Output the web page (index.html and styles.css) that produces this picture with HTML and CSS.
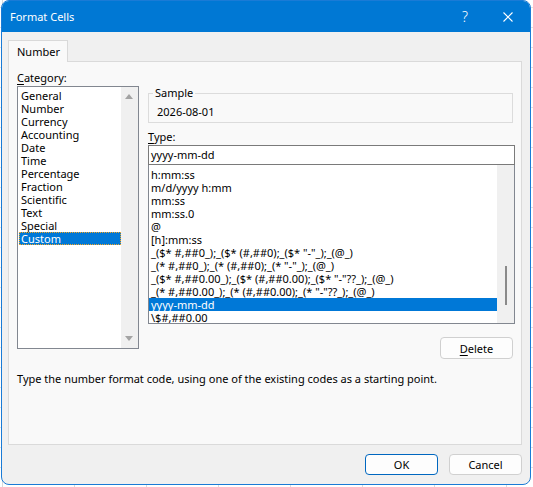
FILE: index.html
```html
<!DOCTYPE html>
<html lang="en">
<head>
    <meta charset="UTF-8">
    <meta name="viewport" content="width=device-width, initial-scale=1.0">
    <title>Format Cells</title>

    <link rel="stylesheet" href="styles.css">
</head>
<body>
    <div class="window">
        <div class="titlebar">
            <span class="title">Format Cells</span>
            <span class="help">?</span>
            <span class="close">
                <svg width="10" height="10" viewBox="0 0 10 10">
                    <path d="M0.5 0.5 L9.5 9.5 M9.5 0.5 L0.5 9.5" stroke="#fff" stroke-width="1.1" fill="none"/>
                </svg>
            </span>
        </div>

        <div class="content">
            <div class="tabs">
                <div class="tab">Number</div>
            </div>

            <section class="panel">
                <div class="columns">
                    <div class="category">
                        <p class="label"><u>C</u>ategory:</p>
                        <div class="listbox cat_list">
                            <ul>
                                <li>General</li>
                                <li>Number</li>
                                <li>Currency</li>
                                <li>Accounting</li>
                                <li>Date</li>
                                <li>Time</li>
                                <li>Percentage</li>
                                <li>Fraction</li>
                                <li>Scientific</li>
                                <li>Text</li>
                                <li>Special</li>
                                <li class="selected focus">Custom</li>
                            </ul>
                            <div class="scrollbar">
                                <span class="arrow up"></span>
                                <span class="arrow down"></span>
                            </div>
                        </div>
                    </div>

                    <div class="format">
                        <fieldset class="sample">
                            <legend>Sample</legend>
                            <p>2026-08-01</p>
                        </fieldset>

                        <p class="label type_label"><u>T</u>ype:</p>
                        <div class="type_input">yyyy-mm-dd</div>
                        <div class="listbox type_list">
                            <ul>
                                <li>h:mm:ss</li>
                                <li>m/d/yyyy h:mm</li>
                                <li>mm:ss</li>
                                <li>mm:ss.0</li>
                                <li>@</li>
                                <li>[h]:mm:ss</li>
                                <li>_($* #,##0_);_($* (#,##0);_($* "-"_);_(@_)</li>
                                <li>_(* #,##0_);_(* (#,##0);_(* "-"_);_(@_)</li>
                                <li>_($* #,##0.00_);_($* (#,##0.00);_($* "-"??_);_(@_)</li>
                                <li>_(* #,##0.00_);_(* (#,##0.00);_(* "-"??_);_(@_)</li>
                                <li class="selected">yyyy-mm-dd</li>
                                <li>\$#,##0.00</li>
                            </ul>
                            <div class="scrollbar">
                                <span class="thumb"></span>
                            </div>
                        </div>

                        <div class="delete_row">
                            <button class="btn"><u>D</u>elete</button>
                        </div>
                    </div>
                </div>

                <p class="hint">Type the number format code, using one of the existing codes as a starting point.</p>
            </section>

            <div class="footer">
                <button class="btn default">OK</button>
                <button class="btn">Cancel</button>
            </div>
        </div>
    </div>
</body>
</html>
```

FILE: styles.css
```css
* {
    margin:0;
    padding:0;
    box-sizing:border-box;
}

body {
    width:533px;
    height:487px;
    overflow:hidden;
    background-color:#fff;
    background-image:
        repeating-linear-gradient(90deg, transparent 0 2px, #dadada 2px 3px, transparent 3px 72px),
        repeating-linear-gradient(0deg, transparent 0 19px, #e2e2e2 19px 20px);
    font-family:"Noto Sans", "Open Sans", sans-serif;
    font-size:11px;
    color:#000;
}

ul, li {
    list-style:none;
}

u {
    text-decoration-thickness:1px;
    text-underline-offset:2px;
}

.window {
    width:530px;
    height:485px;
    margin-left:1px;
    border:1px solid #1a7bd6;
    border-radius:8px;
    overflow:hidden;
    background:#f0f0f0;
}

/* title */
.titlebar {
    display:flex;
    align-items:center;
    height:31px;
    padding-left:8px;
    background:#0078d4;
    color:#fff;
}

.title {
    flex:1;
    font-size:11px;
}

.help {
    width:14px;
    margin-right:31px;
    font-size:14px;
    font-weight:300;
    text-align:center;
}

.close {
    display:flex;
    width:10px;
    margin-right:17px;
}

/* tabs + panel */
.content {
    padding:8px 0 0 6px;
}

.tabs {
    display:flex;
    position:relative;
    z-index:1;
    margin-bottom:-1px;
}

.tab {
    width:60px;
    height:22px;
    padding-left:8px;
    line-height:21px;
    background:#f9f9f9;
    border:1px solid #d9d9d9;
    border-bottom:none;
}

.panel {
    width:514px;
    height:384px;
    padding:8px 0 0 8px;
    background:#f9f9f9;
    border:1px solid #dadada;
}

.columns {
    display:flex;
    gap:9px;
}

.label {
    height:16px;
    line-height:15px;
}

/* list boxes */
.listbox {
    display:flex;
    background:#fff;
    border:1px solid #828790;
    overflow:hidden;
}

.listbox ul {
    flex:1;
    min-width:0;
    padding-top:2px;
}

.listbox li {
    height:13px;
    line-height:13px;
    white-space:nowrap;
}

.listbox li.selected {
    background:#0078d7;
    color:#fff;
}

.scrollbar {
    position:relative;
    width:17px;
    background:#f0f0f0;
}

.cat_list {
    width:122px;
    height:263px;
}

.cat_list ul {
    padding-left:1px;
}

.cat_list li {
    padding-left:2px;
}

.cat_list li.focus {
    outline:1px dotted #f5a623;
    outline-offset:-1px;
}

.arrow {
    display:block;
    position:absolute;
    left:4px;
    width:0;
    height:0;
    border-left:4px solid transparent;
    border-right:4px solid transparent;
}

.arrow.up {
    top:7px;
    border-bottom:5px solid #a3a3a3;
}

.arrow.down {
    bottom:7px;
    border-top:5px solid #a3a3a3;
}

.format {
    width:367px;
}

.sample {
    height:37px;
    margin:16px 2px 0 0;
    padding:5px 8px 0;
    border:1px solid #dcdcdc;
}

.sample legend {
    margin-left:-4px;
    padding:0 2px;
    line-height:14px;
}

.sample p {
    line-height:14px;
}

.type_label {
    margin-top:6px;
}

.type_input {
    height:20px;
    padding-left:2px;
    line-height:18px;
    background:#fff;
    border:1px solid #7a7a7a;
}

.type_list {
    height:159px;
    border-top:none;
}

.type_list ul {
    padding-top:3px;
}

.type_list li {
    padding-left:2px;
}

.thumb {
    position:absolute;
    top:101px;
    left:8px;
    width:2px;
    height:39px;
    background:#8a8a8a;
}

.delete_row {
    display:flex;
    justify-content:flex-end;
    margin:13px 2px 0 0;
}

/* buttons */
.btn {
    width:73px;
    height:22px;
    font-family:inherit;
    font-size:11px;
    color:#000;
    background:#fdfdfd;
    border:1px solid #d0d0d0;
    border-radius:4px;
}

.btn.default {
    height:21px;
    border-color:#0067c0;
}

.hint {
    margin-top:13px;
    line-height:14px;
}

.footer {
    display:flex;
    justify-content:flex-end;
    gap:11px;
    width:514px;
    padding-top:9px;
}

.footer .btn {
    height:21px;
}
```
